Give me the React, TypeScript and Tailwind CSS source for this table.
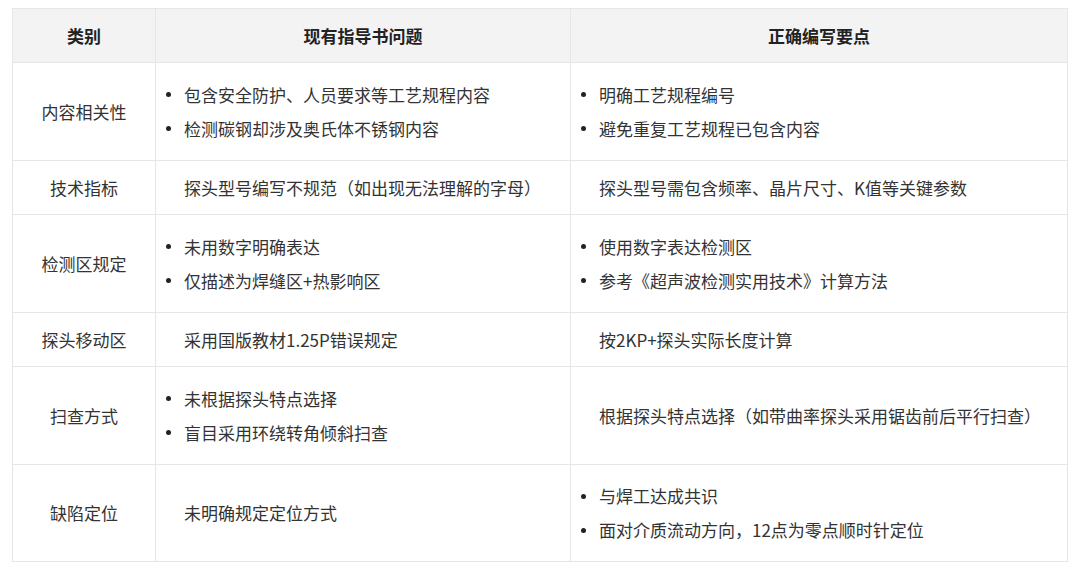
import React from "react";

type Cell = string | string[];

const rows: { label: string; h: string; problem: Cell; correct: Cell }[] = [
	{
		label: "内容相关性",
		h: "h-[98px]",
		problem: ["包含安全防护、人员要求等工艺规程内容", "检测碳钢却涉及奥氏体不锈钢内容"],
		correct: ["明确工艺规程编号", "避免重复工艺规程已包含内容"],
	},
	{
		label: "技术指标",
		h: "h-[54px]",
		problem: "探头型号编写不规范（如出现无法理解的字母）",
		correct: "探头型号需包含频率、晶片尺寸、K值等关键参数",
	},
	{
		label: "检测区规定",
		h: "h-[98px]",
		problem: ["未用数字明确表达", "仅描述为焊缝区+热影响区"],
		correct: ["使用数字表达检测区", "参考《超声波检测实用技术》计算方法"],
	},
	{
		label: "探头移动区",
		h: "h-[54px]",
		problem: "采用国版教材1.25P错误规定",
		correct: "按2KP+探头实际长度计算",
	},
	{
		label: "扫查方式",
		h: "h-[98px]",
		problem: ["未根据探头特点选择", "盲目采用环绕转角倾斜扫查"],
		correct: "根据探头特点选择（如带曲率探头采用锯齿前后平行扫查）",
	},
	{
		label: "缺陷定位",
		h: "h-[97px]",
		problem: "未明确规定定位方式",
		correct: ["与焊工达成共识", "面对介质流动方向，12点为零点顺时针定位"],
	},
];

const Content = ({ value }: { value: Cell }) => {
	if (typeof value === "string") {
		return <div className="pl-[18px]">{value}</div>;
	}
	return (
		<ul className="flex flex-col gap-[10px]">
			{value.map((item) => (
				<li key={item} className="flex items-center">
					<span className="w-[5px] h-[5px] rounded-full bg-[#222] mr-[13px] shrink-0" />
					{item}
				</li>
			))}
		</ul>
	);
};

const App = () => {
	return (
		<div
			className="w-[1080px] h-[570px] bg-white pt-[8px] pl-[12px]"
			style={{ fontFamily: '"Noto Sans CJK SC", "Noto Sans", sans-serif' }}
		>
			<table className="w-[1055px] table-fixed border-collapse border border-[#e6e6e6] text-[17px] leading-[24px] text-[#333]">
				<colgroup>
					<col className="w-[143px]" />
					<col className="w-[415px]" />
					<col className="w-[497px]" />
				</colgroup>
				<thead>
					<tr className="h-[54px] bg-[#f3f3f4] text-[#222] font-bold">
						<th className="border border-[#e6e6e6] text-center">类别</th>
						<th className="border border-[#e6e6e6] text-center">现有指导书问题</th>
						<th className="border border-[#e6e6e6] text-center">正确编写要点</th>
					</tr>
				</thead>
				<tbody>
					{rows.map((row) => (
						<tr key={row.label} className={row.h}>
							<td className="border border-[#e6e6e6] text-center align-middle">{row.label}</td>
							<td className="border border-[#e6e6e6] pl-[10px] align-middle">
								<Content value={row.problem} />
							</td>
							<td className="border border-[#e6e6e6] pl-[10px] align-middle">
								<Content value={row.correct} />
							</td>
						</tr>
					))}
				</tbody>
			</table>
		</div>
	);
};

export default App;
